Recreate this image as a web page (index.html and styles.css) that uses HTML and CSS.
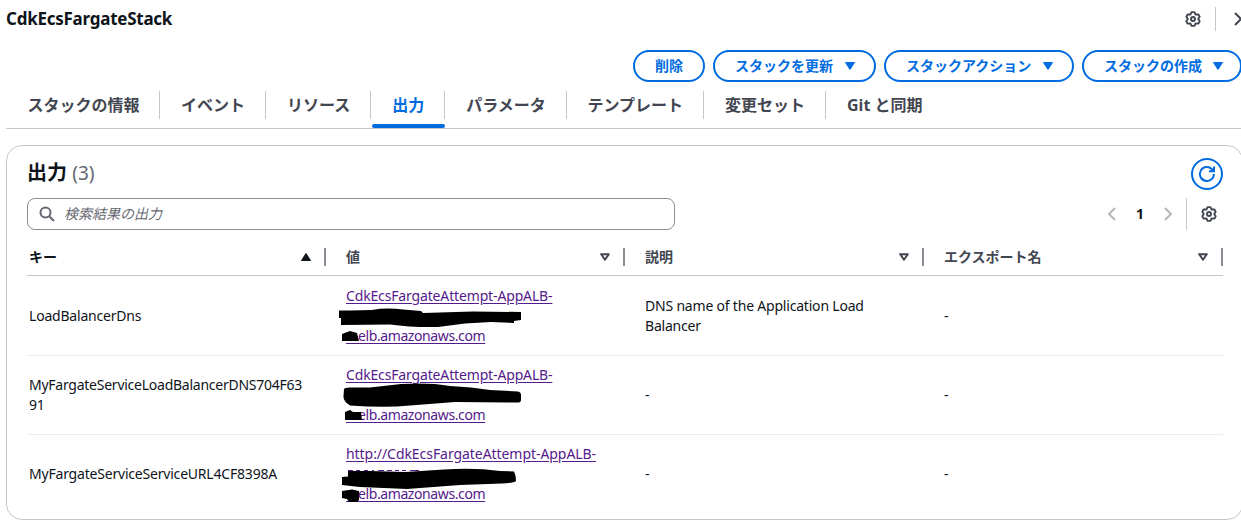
FILE: index.html
```html
<!DOCTYPE html>
<html lang="ja">
<head>
<meta charset="utf-8">
<title>CdkEcsFargateStack</title>
<link rel="stylesheet" href="styles.css">
</head>
<body>
<svg width="0" height="0" class="defs">
  <symbol id="gear" viewBox="0 0 16 16"><path d="M6.6 1.1H9.4L10.6 3.5L13.28 3.34L14.68 5.76L13.2 8L14.68 10.24L13.28 12.66L10.6 12.5L9.4 14.9H6.6L5.4 12.5L2.72 12.66L1.32 10.24L2.8 8L1.32 5.76L2.72 3.34L5.4 3.5Z"/><circle cx="8" cy="8" r="2"/></symbol>
  <symbol id="down" viewBox="0 0 12 10"><path d="M1.5 1.5H10.5L6 8.5Z"/></symbol>
  <symbol id="sort-down" viewBox="0 0 12 10"><path d="M2.2 2.2H9.8L6 7.8Z"/></symbol>
</svg>
<main class="page">
  <header class="top">
    <h1 class="title">CdkEcsFargateStack</h1>
    <div class="tools">
      <svg class="gear"><use href="#gear"/></svg>
      <span class="tools-line"></span>
      <svg class="chev" viewBox="0 0 16 16"><path d="M4 2L10 8L4 14"/></svg>
    </div>
  </header>
  <div class="actions">
    <button class="btn">削除</button>
    <button class="btn menu update">スタックを更新<svg class="caret"><use href="#down"/></svg></button>
    <button class="btn menu action">スタックアクション<svg class="caret"><use href="#down"/></svg></button>
    <button class="btn menu create">スタックの作成<svg class="caret"><use href="#down"/></svg></button>
  </div>
  <nav class="tabs">
    <a class="tab"><span>スタックの情報</span></a>
    <a class="tab"><span>イベント</span></a>
    <a class="tab"><span>リソース</span></a>
    <a class="tab active"><span>出力</span></a>
    <a class="tab"><span>パラメータ</span></a>
    <a class="tab"><span>テンプレート</span></a>
    <a class="tab"><span>変更セット</span></a>
    <a class="tab"><span>Git と同期</span></a>
  </nav>
  <section class="card">
    <div class="card-head">
      <h2 class="heading">出力 <span class="count">(3)</span></h2>
      <button class="refresh"><svg viewBox="0 0 16 16"><path d="M14.9 8A7 7 0 1 1 12.7 2.9L14.6 4.8M15 0.5V5.2H10"/></svg></button>
    </div>
    <div class="filter">
      <div class="search">
        <svg viewBox="0 0 16 16"><circle cx="6.5" cy="6.5" r="5"/><path d="M10.2 10.2L15 15"/></svg>
        <span class="placeholder">検索結果の出力</span>
      </div>
      <div class="pager">
        <svg class="page-arrow" viewBox="0 0 16 16"><path d="M11 2L5 8L11 14"/></svg>
        <b class="page-no">1</b>
        <svg class="page-arrow" viewBox="0 0 16 16"><path d="M5 2L11 8L5 14"/></svg>
        <span class="pager-line"></span>
        <svg class="gear"><use href="#gear"/></svg>
      </div>
    </div>
    <div class="table">
      <div class="row head">
        <div class="th sorted">キー<svg class="sort" viewBox="0 0 12 10"><path d="M1.5 8.5H10.5L6 1.5Z"/></svg></div>
        <div class="th">値<svg class="sort"><use href="#sort-down"/></svg></div>
        <div class="th">説明<svg class="sort"><use href="#sort-down"/></svg></div>
        <div class="th">エクスポート名<svg class="sort"><use href="#sort-down"/></svg></div>
      </div>
      <div class="row first">
        <div class="td">LoadBalancerDns</div>
        <div class="td value"><a class="link">CdkEcsFargateAttempt-AppALB-<br>&nbsp;<br><span class="covered">&nbsp;&nbsp;&nbsp;</span><span class="host">elb.amazonaws.com</span></a>
          <svg class="mask" viewBox="326 276 299 79"><path d="M339 310.5H350L372 310Q386 307.5 403 309.5L421 311L423 313L473 311.5L521 312V320L514 321V323L491 322L465 323.5L438 327Q411 327.5 390 324.5L341 325V318H339ZM342 334L350 331L357 333L359 341H342Z"/></svg></div>
        <div class="td">DNS name of the Application Load<br>Balancer</div>
        <div class="td">-</div>
      </div>
      <div class="row second">
        <div class="td key-long">MyFargateServiceLoadBalancerDNS704F63<br>91</div>
        <div class="td value"><a class="link">CdkEcsFargateAttempt-AppALB-<br>&nbsp;<br><span class="covered">&nbsp;&nbsp;&nbsp;</span><span class="host">elb.amazonaws.com</span></a>
          <svg class="mask" viewBox="326 356 299 79"><path d="M344 389Q345 387 352 387.5L370 387.5L401 384Q430 382.5 450 386L471 387.5L490 390L518 391.5Q521 392 521 395V400Q521 403 516 402.5L455 402L410 405.5Q385 408 350 405.5Q343 401 343.5 396ZM345 412L350 410L353 412H361L362 420H345Z"/></svg></div>
        <div class="td">-</div>
        <div class="td">-</div>
      </div>
      <div class="row third">
        <div class="td">MyFargateServiceServiceURL4CF8398A</div>
        <div class="td value"><a class="link"><span class="url">http://CdkEcsFargateAttempt-AppALB-</span><br>&nbsp;<br><span class="covered">&nbsp;&nbsp;&nbsp;</span><span class="host">elb.amazonaws.com</span></a>
          <svg class="mask" viewBox="326 434 299 79"><path class="traces" d="M348 469.5H353M356 469.5H360M364 469.5H368M372 469.5H374M378 469.5H384M387 469.5H392M395 469.5H399M402 469.5H406M410 469.5H419"/><path d="M348 470H370L405 471L444 468.5Q475 466.5 500 470L514 470.5Q516 474 516 480Q514 482 502 482.5L460 484L407 488L360 486L342 484V476L348 475.5ZM342 490L352 488.5L359 490V499L357 501H349L347 498L342 497Z"/></svg></div>
        <div class="td">-</div>
        <div class="td">-</div>
      </div>
    </div>
  </section>
</main>
</body>
</html>
```
FILE: styles.css
```css
* { box-sizing: border-box; }
body {
  margin: 0;
  overflow: hidden;
  background: #fff;
  color: #0f141a;
  font: 14px/20px "Noto Sans", "Noto Sans CJK JP", sans-serif;
}
svg { fill: none; flex: none; }
button { font: inherit; background: #fff; }
.defs { display: block; height: 0; }
.page { width: 1237px; margin-left: 6px; }
.top { display: flex; justify-content: space-between; align-items: center; height: 38px; }
.title { margin: 0; font-size: 17px; font-weight: 700; letter-spacing: -0.25px; }
.tools { display: flex; align-items: center; color: #424650; }
.gear { width: 16px; height: 16px; stroke: #424650; stroke-width: 1.9; stroke-linejoin: round; }
.tools-line { width: 1px; height: 24px; margin: 0 15px 0 14px; background: #c6c6cd; }
.chev { width: 16px; height: 16px; margin-right: -4px; stroke: currentColor; stroke-width: 2; }
.actions { display: flex; justify-content: flex-end; gap: 8px; margin-top: 12px; margin-right: 1px; }
.btn {
  display: flex;
  align-items: center;
  justify-content: center;
  width: 72px;
  height: 32px;
  padding: 0;
  border: 2px solid #006ce0;
  border-radius: 20px;
  color: #006ce0;
  font-weight: 700;
  white-space: nowrap;
}
.menu { justify-content: flex-start; gap: 11px; padding-left: 20px; }
.update { width: 163px; }
.action { width: 190px; }
.create { width: 160px; }
.create { gap: 10px; }
.caret { width: 12px; height: 10px; fill: #006ce0; stroke: #006ce0; stroke-linejoin: round; }
.tabs { display: flex; height: 47px; border-bottom: 1px solid #c6c6cd; }
.tab {
  position: relative;
  display: flex;
  align-items: flex-start;
  padding-top: 9px;
  color: #424650;
  font-size: 16px;
  font-weight: 700;
  line-height: 28px;
}
.tab span { padding: 0 20px 0 20.5px; border-right: 1px solid #c6c6cd; margin-left: .45px; }
.tab:first-child span { padding-left: 21px; padding-right: 19.7px; }
.tab:last-child span { border: 0; }
.active { color: #006ce0; }
.active::after { content: ""; position: absolute; left: 1px; right: 0; bottom: 0; height: 4px; border-radius: 2px; background: #006ce0; }
.card {
  height: 375px;
  margin-top: 16px;
  padding: 12px 19px 0 20px;
  border: 1px solid #c6c6cd;
  border-radius: 16px;
}
.card-head { display: flex; justify-content: space-between; height: 32px; }
.heading { margin: 0; font-size: 20px; line-height: 30px; font-weight: 700; white-space: pre; }
.count { color: #656871; font-size: 19px; font-weight: 400; }
.refresh { display: grid; place-items: center; width: 32px; height: 32px; padding: 0; border: 2px solid #006ce0; border-radius: 50%; }
.refresh svg { width: 16px; height: 16px; stroke: #006ce0; stroke-width: 2; overflow: visible; }
.filter { display: flex; justify-content: space-between; margin-top: 8px; }
.search { display: flex; align-items: center; gap: 9px; width: 648px; height: 32px; padding-left: 11px; border: 1px solid #8c8c94; border-radius: 8px; }
.search svg { width: 16px; height: 16px; stroke: #656871; stroke-width: 2; }
.placeholder { color: #656871; font-style: italic; }
.pager { display: flex; align-items: center; margin-right: 6px; }
.page-arrow { width: 16px; height: 16px; stroke: #b4b4bb; stroke-width: 2; }
.page-no { width: 40px; text-align: center; }
.pager-line { width: 1px; height: 32px; margin: 0 14px 0 10px; background: #c6c6cd; }
.row { display: grid; grid-template-columns: repeat(4, 299px); align-items: center; height: 79px; border-bottom: 1px solid #ebebf0; }
.head { height: 46px; padding-top: 8px; border-color: #c6c6cd; }
.first { height: 80px; padding-top: 1px; }
.third { height: 78px; border: 0; }
.th {
  display: flex;
  align-items: center;
  justify-content: space-between;
  height: 18px;
  padding: 0 12px 0 20px;
  border-right: 2px solid #8c8c94;
  color: #424650;
  font-weight: 700;
}
.sorted { color: #0f141a; }
.sort { width: 12px; height: 10px; stroke: #424650; stroke-width: 2; stroke-linejoin: round; }
.sorted .sort { fill: #0f141a; stroke: #0f141a; stroke-width: 1; }
.td { padding-left: 20px; white-space: nowrap; letter-spacing: -0.2px; }
.th:first-child, .td:first-child { padding-left: 2px; }
.key-long { letter-spacing: -0.25px; }
.value { position: relative; align-self: start; height: 78px; padding-top: 9px; }
.first .value { margin-top: -1px; padding-top: 10px; }
.link { color: #551a8b; text-decoration: underline; text-underline-offset: 2px; letter-spacing: -0.15px; }
.url { letter-spacing: -0.06px; }
.host { letter-spacing: -0.4px; }
.covered { letter-spacing: 0.35px; }
.mask { position: absolute; left: 0; top: 0; width: 299px; height: 79px; fill: #000; overflow: visible; }
.traces { stroke: #551a8b; stroke-width: 1; }
```
